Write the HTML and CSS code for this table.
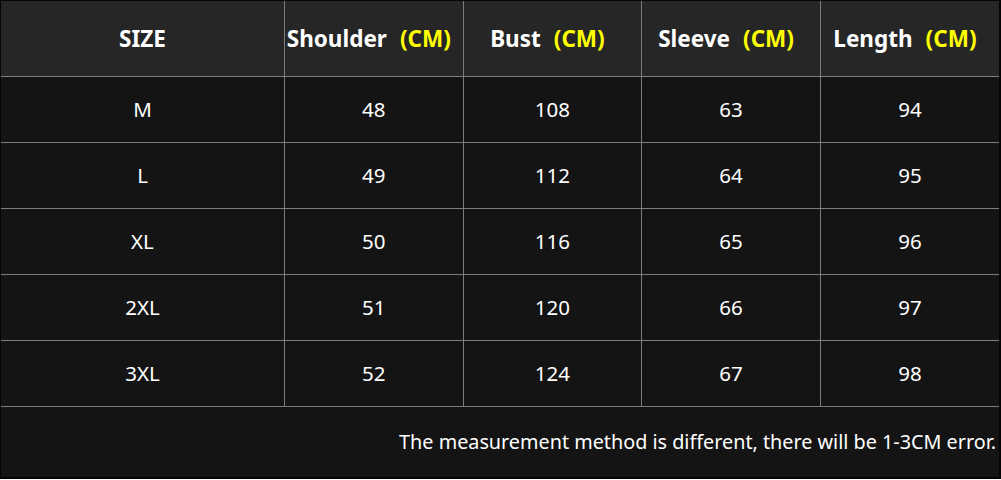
FILE: index.html
```html
<!DOCTYPE html>
<html>
<head>
<meta charset="utf-8">
<link rel="stylesheet" href="styles.css">
</head>
<body>
<div class="frame">
  <table class="chart">
    <thead>
      <tr>
        <th class="c1">SIZE</th>
        <th>Shoulder<span class="unit">(CM)</span></th>
        <th>Bust<span class="unit">(CM)</span></th>
        <th>Sleeve<span class="unit">(CM)</span></th>
        <th>Length<span class="unit">(CM)</span></th>
      </tr>
    </thead>
    <tbody>
      <tr><td>M</td><td>48</td><td>108</td><td>63</td><td>94</td></tr>
      <tr><td>L</td><td>49</td><td>112</td><td>64</td><td>95</td></tr>
      <tr><td>XL</td><td>50</td><td>116</td><td>65</td><td>96</td></tr>
      <tr><td>2XL</td><td>51</td><td>120</td><td>66</td><td>97</td></tr>
      <tr><td>3XL</td><td>52</td><td>124</td><td>67</td><td>98</td></tr>
      <tr class="note"><td colspan="5">The measurement method is different, there will be 1-3CM error.</td></tr>
    </tbody>
  </table>
</div>
</body>
</html>
```
FILE: styles.css
```css
html, body {
  margin: 0;
  padding: 0;
  background: #ffffff;
}
.frame {
  width: 998px;
  height: 476px;
  border-style: solid;
  border-color: #050505;
  border-width: 1px 2px 2px 1px;
  background: #141414;
  overflow: hidden;
}
.chart {
  width: 998px;
  border-collapse: collapse;
  table-layout: fixed;
  font-family: "Noto Sans", "Open Sans", sans-serif;
  color: #ffffff;
}
.chart th, .chart td {
  border: 1px solid #7c7c7c;
  text-align: center;
  padding: 0;
}
.chart tr > :first-child { border-left: none; }
.chart tr > :last-child { border-right: none; }
.chart thead th {
  border-top: none;
  background: #262626;
  height: 75px;
  padding-right: 10px;
  font-size: 22.5px;
  font-weight: 700;
  white-space: nowrap;
}
.chart thead th.c1 {
  width: 283px;
  padding-right: 0;
}
.unit {
  color: #ffff00;
  margin-left: 13px;
}
.chart tbody td {
  height: 63px;
  padding-bottom: 2px;
  font-size: 20.5px;
  font-weight: 400;
}
.chart tr.note td {
  border-bottom: none;
  height: 69px;
  text-align: right;
  padding-right: 3px;
  padding-bottom: 1px;
  font-size: 19.8px;
}
```
